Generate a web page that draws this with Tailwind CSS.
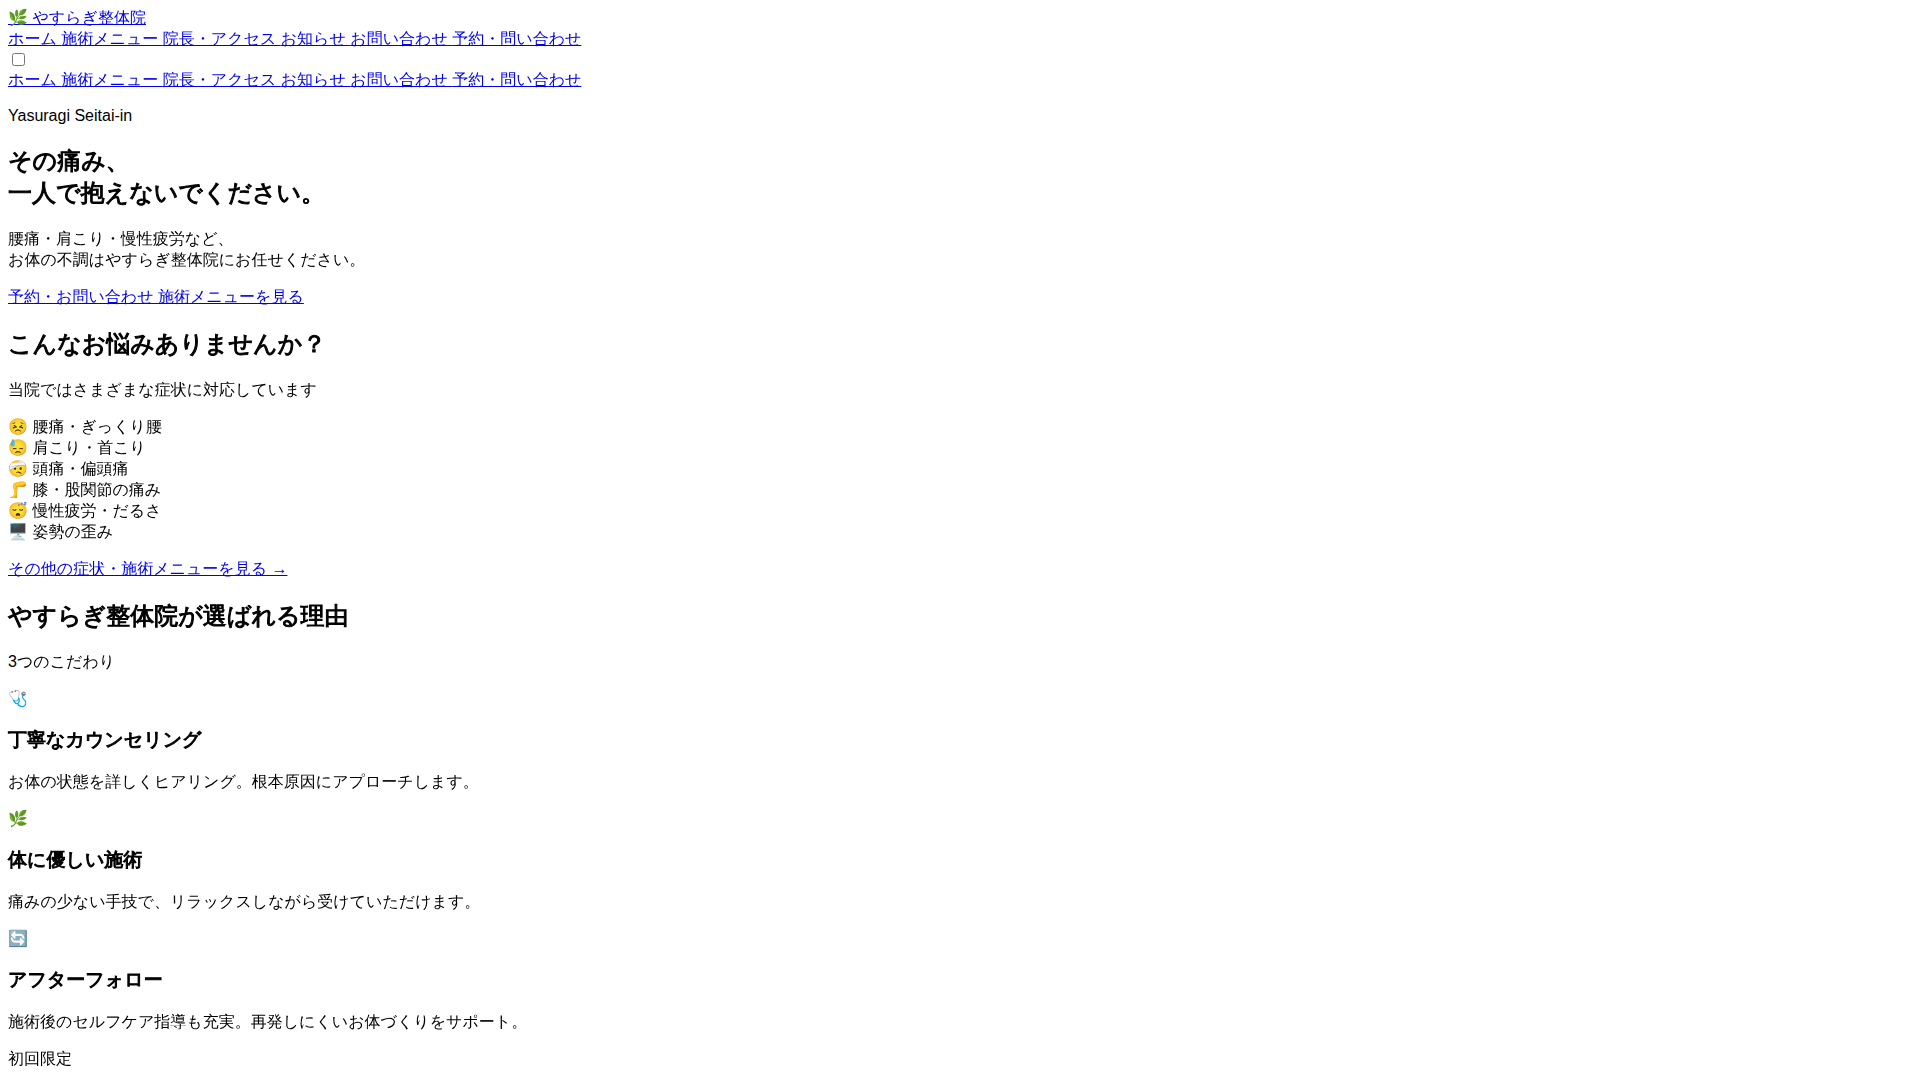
<!DOCTYPE html>
<html lang="ja">
<head>
<meta charset="utf-8">
<title>やすらぎ整体院</title>
<script src="https://cdn.jsdelivr.net/npm/@tailwindcss/browser@4"></script>
</head>
<body class="h-screen overflow-hidden bg-white p-2 font-['Liberation_Sans','WenQuanYi_Zen_Hei','Noto_Sans_CJK_JP',sans-serif] text-base leading-[normal] text-black [&_a]:text-[#0000ee] [&_a]:underline">
<header>
<a href="#">🌿 やすらぎ整体院</a>
<nav>
<a href="#">ホーム </a><a href="#">施術メニュー </a><a href="#">院長・アクセス </a><a href="#">お知らせ </a><a href="#">お問い合わせ </a><a href="#">予約・問い合わせ</a>
</nav>
<div><input type="checkbox" aria-label="メニュー" class="mt-[3px] mr-[3px] ml-1"></div>
<nav>
<a href="#">ホーム </a><a href="#">施術メニュー </a><a href="#">院長・アクセス </a><a href="#">お知らせ </a><a href="#">お問い合わせ </a><a href="#">予約・問い合わせ</a>
</nav>
</header>
<main>
<section>
<p class="my-4">Yasuragi Seitai-in</p>
<h1 class="my-5 text-2xl leading-[normal] font-bold [-webkit-text-stroke:1px]">その痛み、<br>一人で抱えないでください。</h1>
<p class="my-4">腰痛・肩こり・慢性疲労など、<br>お体の不調はやすらぎ整体院にお任せください。</p>
<div><a href="#">予約・お問い合わせ </a><a href="#">施術メニューを見る</a></div>
</section>
<section>
<h2 class="my-5 text-2xl leading-[normal] font-bold [-webkit-text-stroke:1px]">こんなお悩みありませんか？</h2>
<p class="my-4">当院ではさまざまな症状に対応しています</p>
<div>😣 腰痛・ぎっくり腰</div>
<div>😓 肩こり・首こり</div>
<div>🤕 頭痛・偏頭痛</div>
<div>🦵 膝・股関節の痛み</div>
<div>😴 慢性疲労・だるさ</div>
<div>🖥️ 姿勢の歪み</div>
<p class="my-4"><a href="#">その他の症状・施術メニューを見る →</a></p>
</section>
<section>
<h2 class="my-5 text-2xl leading-[normal] font-bold [-webkit-text-stroke:1px]">やすらぎ整体院が選ばれる理由</h2>
<p class="my-4">3つのこだわり</p>
<div>🩺</div>
<h3 class="my-[19px] text-[19px] leading-[normal] font-bold [-webkit-text-stroke:1px]">丁寧なカウンセリング</h3>
<p class="my-4">お体の状態を詳しくヒアリング。根本原因にアプローチします。</p>
<div>🌿</div>
<h3 class="my-[19px] text-[19px] leading-[normal] font-bold [-webkit-text-stroke:1px]">体に優しい施術</h3>
<p class="my-4">痛みの少ない手技で、リラックスしながら受けていただけます。</p>
<div>🔄</div>
<h3 class="my-[19px] text-[19px] leading-[normal] font-bold [-webkit-text-stroke:1px]">アフターフォロー</h3>
<p class="my-4">施術後のセルフケア指導も充実。再発しにくいお体づくりをサポート。</p>
<div>初回限定</div>
</section>
</main>
</body>
</html>
